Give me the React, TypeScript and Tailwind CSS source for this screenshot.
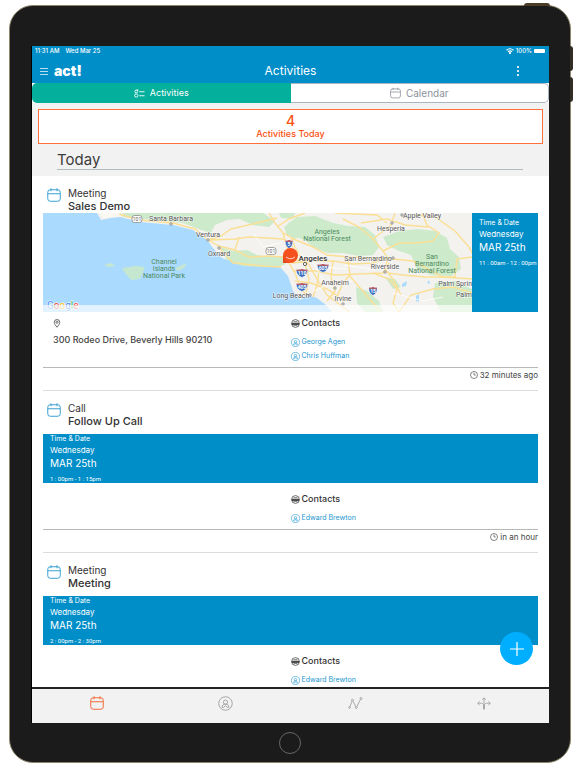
import React from "react";

type IconProps = { className?: string };

function CalendarIcon({ className }: IconProps) {
  return (
    <svg viewBox="0 0 28 28" fill="none" stroke="currentColor" strokeWidth="2" className={className} aria-hidden="true">
      <rect x="1.5" y="3.5" width="25" height="23" rx="5" />
      <path d="M1.5 11.5h25M8 0.5v6M20 0.5v6" />
    </svg>
  );
}

function PersonIcon({ className }: IconProps) {
  return (
    <svg viewBox="0 0 28 28" fill="none" stroke="currentColor" strokeWidth="1.8" className={className} aria-hidden="true">
      <circle cx="14" cy="14" r="12.6" />
      <circle cx="14" cy="11.5" r="4" />
      <path d="M7.5 21c.5-4 3-6 6.5-6s6 2 6.5 6l-3 .2-3.5-3-3.500 3z" />
    </svg>
  );
}

function ContactsIcon({ className }: IconProps) {
  return (
    <svg viewBox="0 0 18 18" fill="none" stroke="currentColor" strokeWidth="1.4" className={className} aria-hidden="true">
      <circle cx="9" cy="9" r="7.8" />
      <path d="M2 8.500h14v2.500H2z" fill="currentColor" />
      <path d="M5 5.500h8M5 14.500l2-2.500 2 2 2-2 2 2.500" />
    </svg>
  );
}

function ClockIcon({ className }: IconProps) {
  return (
    <svg viewBox="0 0 16 16" fill="none" stroke="currentColor" strokeWidth="1.3" className={className} aria-hidden="true">
      <circle cx="8" cy="8" r="7" />
      <path d="M8 3.5V8h3.5" />
    </svg>
  );
}

function PinIcon({ className }: IconProps) {
  return (
    <svg viewBox="0 0 14 18" fill="none" stroke="currentColor" strokeWidth="1.5" className={className} aria-hidden="true">
      <path d="M7 16.5C4.5 13 1.5 10 1.5 6.5a5.5 5.5 0 0 1 11 0C12.5 10 9.5 13 7 16.5z" />
      <circle cx="7" cy="6.5" r="2.2" />
    </svg>
  );
}

function ListIcon({ className }: IconProps) {
  return (
    <svg viewBox="0 0 22 18" fill="none" stroke="currentColor" strokeWidth="1.8" className={className} aria-hidden="true">
      <circle cx="4.5" cy="5" r="2.8" />
      <circle cx="4.5" cy="13" r="3.3" />
      <path d="M5 2h4M10.5 5.5H21M10.5 13.5H21" />
    </svg>
  );
}

function GraphIcon({ className }: IconProps) {
  return (
    <svg viewBox="0 0 30 24" fill="none" stroke="currentColor" strokeWidth="1.8" className={className} aria-hidden="true">
      <path d="M3.5 20L8 8.500M10 8.500l5.500 11M17.500 19.500l7.500-15" />
      <circle cx="3" cy="21" r="1.7" />
      <circle cx="9" cy="6.500" r="2" />
      <circle cx="16.500" cy="21" r="2" />
      <circle cx="26" cy="3" r="2" />
    </svg>
  );
}

function ArrowsIcon({ className }: IconProps) {
  return (
    <svg viewBox="0 0 28 26" fill="none" stroke="currentColor" strokeWidth="1.800" className={className} aria-hidden="true">
      <path d="M14 2v22M10.500 5.500L14 1.500l3.500 4M5 8.500l-3.500 4 3.500 4M23 8.500l3.500 4-3.500 4M2 12.500h7c3 0 4 2 5 5 1-3 2-5 5-5h7" />
      <path d="M12.800 17h2.400l-1.200 8z" fill="currentColor" />
    </svg>
  );
}

function Shield({ x, y, w = 9, label }: { x: number; y: number; w?: number; label: string }) {
  const h = w / 2;
  return (
    <g transform={`translate(${x} ${y})`}>
      <path
        d={`M${-h} -3.5Q${-h / 2} -2.8 0 -4Q${h / 2} -2.8 ${h} -3.5Q${h + 1} 2 0 4.5Q${-h - 1} 2 ${-h} -3.5z`}
        fill="#3b6fc2"
        stroke="#ffffff"
        strokeWidth="0.5"
      />
      <path d={`M${-h} -3.5Q${-h / 2} -2.8 0 -4Q${h / 2} -2.8 ${h} -3.5V-2.2H${-h}z`} fill="#d0544f" />
      <text y="2.2" textAnchor="middle" fontSize="5" fontWeight="700" fill="#ffffff">
        {label}
      </text>
    </g>
  );
}

function RouteSign({ x, y }: { x: number; y: number }) {
  return (
    <g transform={`translate(${x} ${y})`}>
      <rect x="-5" y="-3.5" width="10" height="7" rx="2.5" fill="#ffffff" stroke="#8a8a8a" strokeWidth="0.8" />
      <text y="2" textAnchor="middle" fontSize="5" fill="#666666">
        101
      </text>
    </g>
  );
}

const towns = [
  { x: 128, y: 8, label: "Santa Barbara", dot: [128, 11] },
  { x: 165, y: 24, label: "Ventura", dot: [165, 27] },
  { x: 176, y: 43, label: "Oxnard", dot: [176, 35] },
  { x: 379, y: 5, label: "Apple Valley", dot: [359, 2] },
  { x: 348, y: 18, label: "Hesperia", dot: [349, 10] },
  { x: 325, y: 48, label: "San Bernardino", dot: [350, 45] },
  { x: 342, y: 56, label: "Riverside", dot: [342, 59] },
  { x: 292, y: 72, label: "Anaheim", dot: [292, 75] },
  { x: 248, y: 85, label: "Long Beach", dot: [267, 82] },
  { x: 300, y: 88, label: "Irvine", dot: [300, 91] },
];

const parks = [
  { x: 121, y: 51, label: "Channel" },
  { x: 121, y: 58, label: "Islands" },
  { x: 121, y: 65, label: "National Park" },
  { x: 284, y: 21, label: "Angeles" },
  { x: 284, y: 28, label: "National Forest" },
  { x: 389, y: 46, label: "San" },
  { x: 389, y: 53, label: "Bernardino" },
  { x: 389, y: 60, label: "National Forest" },
];

function MapView() {
  return (
    <svg
      viewBox="0 0 429 99"
      preserveAspectRatio="xMidYMid slice"
      className="h-[99px] min-w-0 flex-1 font-['Roboto',sans-serif]"
      role="img"
      aria-label="Map of the meeting location"
    >
      <rect width="429" height="99" fill="#f3f2ef" />
      <g fill="#cdeacb">
        <path d="M80 0H220L232 8 226 14 210 12 196 6 184 7 172 12 168 20 158 17 140 10 110 7 80 4z" />
        <path d="M236 0H252L250 6 238 5z" />
        <path d="M177 34L190 38 204 37 214 42 228 44 240 43 243 51 235 54 215 56 198 53 184 48z" />
        <path d="M241 14L254 4 272 3 290 10 305 13 322 14 332 22 336 34 330 42 316 43 300 40 284 40 270 34 262 27 244 22z" />
        <path d="M246 9L256 7 262 18 252 26 243 20z" />
        <path d="M340 24L356 18 374 16 392 18 404 25 407 36 416 44 418 56 408 63 388 62 374 56 368 42 356 38 344 32z" />
        <path d="M313 74L324 78 336 88 340 99H322L314 90z" />
        <path d="M392 70L412 68 429 76V99H398L390 84z" />
        <path d="M342 64L352 66 358 74 350 76z" />
      </g>
      <path
        d="M0 0H54L58 7 68 5 77 4 97 9 130 12 150 17 164 27 170 35 179 45 200 53 220 54 237 54 245 63 250 78 257 87 265 82 274 85 283 92 289 99H0z"
        fill="#abdaff"
      />
      <path d="M56 0L60 5 78 3 76 0z" fill="#fbf8f2" />
      <g fill="#c5e6cf">
        <path d="M79 55L92 53 102 54 97 66 88 67 82 60z" />
        <path d="M61 52L67 50 73 53 66 54z" />
        <path d="M132 55L144 50 141 55 135 58z" />
      </g>
      <g fill="#abdaff">
        <path d="M359 71l5-3-1 5-4 1zM373 83l3-2v8l-3-1zM384 70l2-3 1 4z" />
      </g>
      <g fill="none" stroke="#fbdf94" strokeWidth="1.4">
        <path d="M76 1L96 7 130 10 152 16 165 27 176 33 192 37 206 44 226 43 240 44 250 46 260 49" />
        <path d="M165 27L178 23 188 16 214 10 234 5M168 27L192 26 206 24 240 26 250 34M192 37L196 24M176 34L190 50 220 53 238 54" />
        <path d="M226 0L232 10 240 20 248 24 252 34 258 44 266 52 274 66 284 82 300 94 306 99" />
        <path d="M234 14L246 6 262 0M240 20L244 34 246 50 252 60 258 76 264 83M248 25L270 34 284 42 306 44 330 45 350 46 370 48 400 64 429 66" />
        <path d="M249 50L270 48 290 48 310 51 330 50 345 44M250 58L272 58 292 62 316 61 340 60 346 50M252 68L268 70 284 76 302 88M262 50L266 66 263 80M277 52L274 72 270 84M290 48L288 64 292 78 284 88M305 46L307 62 300 70 294 84" />
        <path d="M306 62L318 76 330 90 337 99M330 60L346 66 354 76 350 90 356 99M345 60L360 62 382 64 412 64 414 46 429 44M345 44L342 56 350 66 358 82" />
        <path d="M300 6L316 14 330 26 340 38 345 46M330 26L348 12 352 0M292 0L334 2 344 10M340 38L356 30 374 30 390 28 396 20 384 12 379 0M372 2L392 4 412 18 426 34 429 40M356 99L368 82 390 76 410 74 429 80M318 10L344 6 362 12 386 14" />
      </g>
      <g fill="none" stroke="#ffffff" strokeWidth="0.8">
        <path d="M255 40L280 54 304 56M268 46L282 70 296 76M300 52L328 56 354 54M270 78L290 70 310 68M350 80L380 88 400 84M210 20L220 34 238 30" />
      </g>
      <RouteSign x={94} y={6} />
      <RouteSign x={228} y={38} />
      <Shield x={246} y={31} w={7} label="5" />
      <Shield x={259} y={60} w={11} label="110" />
      <Shield x={280} y={55} w={11} label="605" />
      <Shield x={259} y={74} w={11} label="405" />
      <Shield x={330} y={78} w={8} label="15" />
      <g fontSize="7" fill="#555555" stroke="#ffffff" strokeWidth="1.2" strokeOpacity="0.7" paintOrder="stroke" textAnchor="middle">
        {towns.map((t) => (
          <text key={t.label} x={t.x} y={t.y}>
            {t.label}
          </text>
        ))}
        <text x="429" y="73" textAnchor="end">
          Palm Sprin
        </text>
        <text x="429" y="84" textAnchor="end">
          Palm
        </text>
        <text x="270" y="48" fontSize="8" fontWeight="500" fill="#333333">
          Angeles
        </text>
      </g>
      <g fill="#ffffff" stroke="#666666" strokeWidth="0.7">
        {towns.map((t) => (
          <circle key={t.label} cx={t.dot[0]} cy={t.dot[1]} r="1.2" />
        ))}
        <circle cx="262" cy="51" r="1.6" stroke="#222222" />
      </g>
      <g fontSize="7" fill="#4b8a5c" textAnchor="middle">
        {parks.map((p) => (
          <text key={p.label + p.y + p.x} x={p.x} y={p.y}>
            {p.label}
          </text>
        ))}
      </g>
      <path d="M240 42v8h7z" fill="#e8471c" />
      <circle cx="247.5" cy="42.5" r="7.5" fill="#f4511e" />
      <path d="M243 44q4.500 3.500 9 0" fill="none" stroke="#ffd9cc" strokeWidth="1" />
      <text x="4" y="96" fontSize="10" stroke="#ffffff" strokeWidth="1" paintOrder="stroke">
        <tspan fill="#4285f4">G</tspan>
        <tspan fill="#ea4335">o</tspan>
        <tspan fill="#fbbc05">o</tspan>
        <tspan fill="#4285f4">g</tspan>
        <tspan fill="#34a853">l</tspan>
        <tspan fill="#ea4335">e</tspan>
      </text>
      <rect y="92" width="429" height="7" fill="#ffffff" fillOpacity="0.65" />
    </svg>
  );
}

type Activity = {
  kind: string;
  title: string;
  time: string;
  contacts: string[];
  address?: string;
  due?: string;
};

const activities: Activity[] = [
  {
    kind: "Meeting",
    title: "Sales Demo",
    time: "11 : 00am - 12 : 00pm",
    contacts: ["George Agen", "Chris Huffman"],
    address: "300 Rodeo Drive, Beverly Hills 90210",
    due: "32 minutes ago",
  },
  { kind: "Call", title: "Follow Up Call", time: "1 : 00pm - 1 : 15pm", contacts: ["Edward Brewton"], due: "in an hour" },
  { kind: "Meeting", title: "Meeting", time: "2 : 00pm - 2 : 30pm", contacts: ["Edward Brewton"] },
];

function TimeBlock({ time }: { time: string }) {
  return (
    <div className="pl-[7px] whitespace-nowrap text-white">
      <p className="text-[7px] leading-[10px]">Time &amp; Date</p>
      <p className="text-[8px] leading-[12px]">Wednesday</p>
      <p className="text-[10px] leading-[14px]">MAR 25th</p>
      <p className="mt-1 font-['Roboto',sans-serif] text-[6px] leading-[9px]">{time}</p>
    </div>
  );
}

function ActivityCard({ activity }: { activity: Activity }) {
  const { kind, title, time, contacts, address, due } = activity;
  return (
    <article className="mx-[11px] border-b border-[#dcdcdc] pt-[11px] pb-2">
      <header className={`flex gap-[7px] pl-1 text-[#333] ${address ? "" : "pb-[6px]"}`}>
        <CalendarIcon className="mt-px h-[14px] w-[14px] text-[#3aa0d2]" />
        <div>
          <p className="text-[10px] leading-[13px]">{kind}</p>
          <h2 className="text-[11px] leading-[13px] font-medium">{title}</h2>
        </div>
      </header>
      {address ? (
        <div className="flex">
          <MapView />
          <div className="w-[66px] bg-[#008ec9] pt-[5px]">
            <TimeBlock time={time} />
          </div>
        </div>
      ) : (
        <div className="bg-[#008ec9]">
          <TimeBlock time={time} />
        </div>
      )}
      <div className={`grid grid-cols-2 pb-1 ${address ? "pt-[5px]" : "pt-[10px]"}`}>
        <div className="pl-[10px] text-[#444]">
          {address && (
            <>
              <PinIcon className="mt-[2px] h-[9px] w-[8px]" />
              <p className="mt-[6px] text-[9px] leading-[12px] font-medium whitespace-nowrap">{address}</p>
            </>
          )}
        </div>
        <div>
          <h3 className="flex items-center gap-[2px] text-[9px] leading-[12px] font-medium text-[#333]">
            <ContactsIcon className="h-[9px] w-[9px]" />
            Contacts
          </h3>
          <ul className="mt-[6px]">
            {contacts.map((name) => (
              <li key={name} className="h-[14px]">
                <a href="#contact" className="flex items-center gap-[2px] text-[7px] leading-[14px] text-[#2196cf]">
                  <PersonIcon className="h-[9px] w-[9px]" />
                  {name}
                </a>
              </li>
            ))}
          </ul>
        </div>
      </div>
      {due && (
        <p className="flex items-center justify-end gap-[2px] border-t border-[#b8b8b8] pt-px pb-px text-[8px] leading-[12px] text-[#444]">
          <ClockIcon className="h-[8px] w-[8px]" />
          {due}
        </p>
      )}
    </article>
  );
}

function TopBar() {
  return (
    <header className="bg-[#008ec9] text-white">
      <div className="flex h-[10px] items-center justify-between pr-1 pl-[3px] text-[6px] leading-[10px] font-medium">
        <div className="flex gap-[6px]">
          <span>11:31 AM</span>
          <span>Wed Mar 25</span>
        </div>
        <div className="flex items-center gap-[2px]">
          <svg viewBox="0 0 16 12" className="h-[6px] w-[8px]" fill="none" stroke="currentColor" strokeWidth="2.2" aria-hidden="true">
            <path d="M1 4.5q7-6 14 0M4 7.5q4-3.500 8 0" />
            <circle cx="8" cy="10" r="1" fill="currentColor" />
          </svg>
          <span>100%</span>
          <span className="h-1 w-[11px] rounded-[1px] bg-white" />
        </div>
      </div>
      <div className="grid h-[27px] grid-cols-3 items-center pt-1 pb-px">
        <div className="flex items-center gap-[6px] pl-2">
          <button type="button" aria-label="Menu" className="flex w-2 flex-col gap-[2px]">
            <span className="h-px bg-[#b5dcf0]" />
            <span className="h-px bg-[#b5dcf0]" />
            <span className="h-px bg-[#b5dcf0]" />
          </button>
          <span className="text-[14px] leading-4 font-black">act!</span>
        </div>
        <h1 className="text-center text-[12px] leading-4">Activities</h1>
        <button type="button" aria-label="More" className="mr-[30px] flex flex-col gap-[2px] justify-self-end">
          <span className="h-[2px] w-[2px] bg-[#d5ecf7]" />
          <span className="h-[2px] w-[2px] bg-[#d5ecf7]" />
          <span className="h-[2px] w-[2px] bg-[#d5ecf7]" />
        </button>
      </div>
    </header>
  );
}

export default function App() {
  return (
    <div className="h-screen bg-white py-[5px] pr-[5px] pl-[9px] font-['Inter',sans-serif]">
      <div className="relative flex h-full flex-col rounded-[24px] border border-[#8a8468] bg-[#1b1b1b] px-[21px] pt-10 pb-[39px]">
        <span className="absolute -top-[3px] right-[20px] h-[3px] w-[26px] rounded-t-sm bg-[#4a3d28]" />
        <span className="absolute top-10 -right-[3px] h-[25px] w-[3px] rounded-r-sm bg-[#332c24]" />
        <span className="absolute top-[71px] -right-[3px] h-[25px] w-[3px] rounded-r-sm bg-[#332c24]" />

        <div className="relative flex min-h-0 flex-1 flex-col border-l border-black bg-white">
          <TopBar />

          <div className="grid h-[20px] grid-cols-2 bg-white">
            <button type="button" className="flex items-center justify-center gap-[5px] rounded-l-[5px] bg-[#04b09c] text-[9px] leading-[12px] text-white">
              <ListIcon className="h-[9px] w-[11px]" />
              Activities
            </button>
            <button
              type="button"
              className="flex items-center justify-center gap-[5px] rounded-r-[5px] border border-l-0 border-[#a9b6c2] bg-white text-[10px] leading-[12px] text-[#8d939b]"
            >
              <CalendarIcon className="h-[12px] w-[11px]" />
              Calendar
            </button>
          </div>

          <main className="min-h-0 flex-1 overflow-y-auto [scrollbar-width:none]">
            <section className="bg-[#f2f2f2] px-[6px] pt-[6px] pb-[6px]">
              <div className="flex h-[35px] flex-col items-center justify-center border border-[#ff6f3c] bg-white text-[#f9500f]">
                <span className="text-[14px] leading-[14px] font-medium">4</span>
                <span className="text-[9px] leading-[12px] font-medium">Activities Today</span>
              </div>
              <h2 className="mr-5 ml-[19px] border-b border-[#b5bcc0] pt-[6px] text-[15px] leading-[19px] text-[#3c3c3c]">Today</h2>
            </section>
            {activities.map((a) => (
              <ActivityCard key={a.title} activity={a} />
            ))}
          </main>

          <nav className="grid h-[36px] shrink-0 grid-cols-4 border-t-2 border-[#222] bg-[#f2f2f2] text-[#a3a3a3]">
            <button type="button" aria-label="Activities" className="flex items-center justify-center pb-[6px] text-[#f26b3a]">
              <CalendarIcon className="h-[14px] w-[14px]" />
            </button>
            <button type="button" aria-label="Contacts" className="flex items-center justify-center pb-[6px]">
              <PersonIcon className="h-[15px] w-[15px]" />
            </button>
            <button type="button" aria-label="Opportunities" className="flex items-center justify-center pb-[6px]">
              <GraphIcon className="h-[12px] w-[15px]" />
            </button>
            <button type="button" aria-label="More options" className="flex items-center justify-center pb-[6px]">
              <ArrowsIcon className="h-[13px] w-[14px]" />
            </button>
          </nav>

          <button
            type="button"
            aria-label="Add activity"
            className="absolute right-4 bottom-[58px] flex h-[33px] w-[33px] items-center justify-center rounded-full bg-[#00aeff] text-white"
          >
            <svg viewBox="0 0 14 14" className="h-[14px] w-[14px]" stroke="currentColor" strokeWidth="1.2" aria-hidden="true">
              <path d="M7 0v14M0 7h14" />
            </svg>
          </button>
        </div>

        <button
          type="button"
          aria-label="Home"
          className="absolute bottom-2 left-1/2 h-[22px] w-[22px] -translate-x-1/2 rounded-full border border-[#666]"
        />
      </div>
    </div>
  );
}
